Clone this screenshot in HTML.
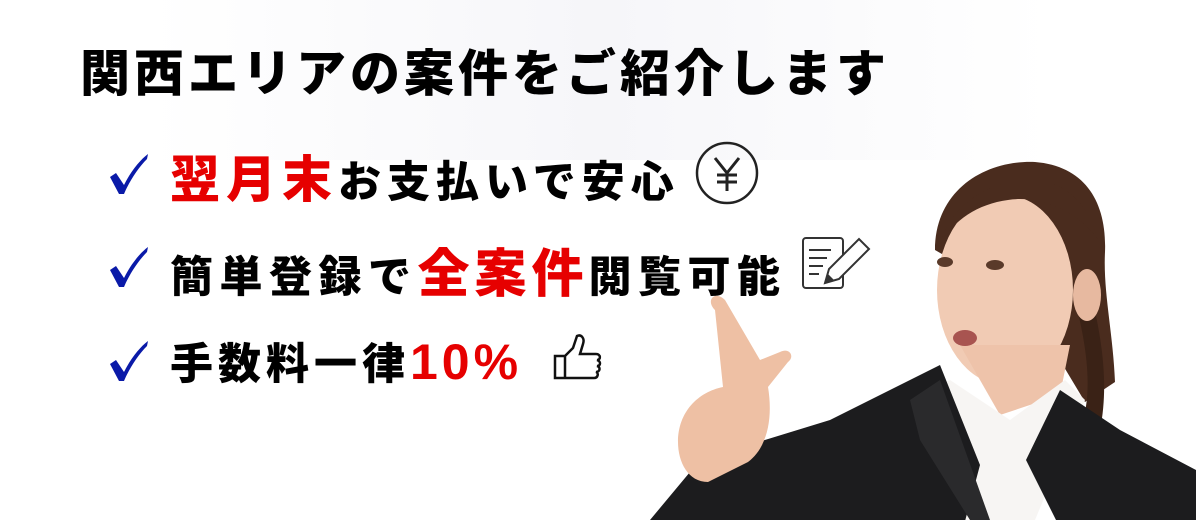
<!DOCTYPE html>
<html><head><meta charset="utf-8"><style>
body{margin:0;width:1196px;height:520px;overflow:hidden;background:#fff;position:relative;font-family:"Liberation Sans","Noto Sans CJK JP",sans-serif;font-weight:900}
.t{position:absolute;white-space:nowrap;color:#000}
.r{color:#e60000}
</style></head><body>
<div style="position:absolute;left:150px;top:0;width:900px;height:160px;background:linear-gradient(90deg,#fff,#f6f6f9 50%,#fff)"></div>
<div class="t" style="left:80px;top:34px;font-size:50px;letter-spacing:4px">関西エリアの案件をご紹介します</div>
<div class="t" style="left:170px;top:140px;font-size:43px;letter-spacing:6px"><span class="r" style="font-size:50px;letter-spacing:6px">翌月末</span>お支払いで安心</div>
<div class="t" style="left:170px;top:232px;font-size:43px;letter-spacing:6.5px">簡単登録で<span class="r" style="font-size:52px;letter-spacing:5px">全案件</span>閲覧可能</div>
<div class="t" style="left:170px;top:330px;font-size:43px;letter-spacing:5px">手数料一律<span class="r" style="font-size:50px;letter-spacing:4px">10%</span></div>
<svg style="position:absolute;left:0;top:0" width="1196" height="520">
<g fill="#0a1aa8">
<path d="M110 177l6-4l8 12c7-14 16-25 24-31l-1 5c-9 9-18 23-23 35l-5 0z"/>
<path d="M110 270l6-4l8 12c7-14 16-25 24-31l-1 5c-9 9-18 23-23 35l-5 0z"/>
<path d="M110 364l6-4l8 12c7-14 16-25 24-31l-1 5c-9 9-18 23-23 35l-5 0z"/>
</g>
<circle cx="727" cy="173" r="30" fill="none" stroke="#222" stroke-width="2.5"/>
<path d="M715 158l12 15l12-15M727 173v18M717 175h20M717 182h20" fill="none" stroke="#222" stroke-width="3"/>
<rect x="803" y="238" width="40" height="50" rx="3" fill="none" stroke="#333" stroke-width="2"/>
<path d="M809 250h22M809 258h18M809 266h14M809 274h10" stroke="#333" stroke-width="2"/>
<path d="M825 283l4-14l30-30l10 10l-30 30z" fill="#fff" stroke="#333" stroke-width="2"/>
<path d="M825 283l3-9l6 6z" fill="#333"/>
<path d="M555 378v-22h10v22zM565 356l8-8l4-12c4-2 8 2 6 8l-3 10h16c5 0 5 6 1 6c4 1 4 6 0 6c4 1 3 6-1 6c3 1 2 6-2 6h-29z" fill="none" stroke="#111" stroke-width="2.5"/>
<path d="M935 250c0-60 50-90 100-88c50 4 72 40 70 90c-2 40 8 80 10 130l-30 20l-60-100z" fill="#4a2c1e"/>
<path d="M1075 300c10 40 20 90 5 130l20 0c10-50 0-100-10-140z" fill="#3a2216"/>
<ellipse cx="1005" cy="290" rx="68" ry="95" fill="#f1cbb4"/>
<path d="M940 245c10-40 50-65 90-65c40 0 60 30 68 60c-20-30-60-45-90-40c-30 4-55 20-68 45z" fill="#4a2c1e"/>
<ellipse cx="1087" cy="295" rx="14" ry="26" fill="#e7b9a0"/>
<path d="M960 345l40 70l60-20l10-50z" fill="#eec3aa"/>
<ellipse cx="965" cy="338" rx="12" ry="8" fill="#a85450"/>
<ellipse cx="945" cy="262" rx="8" ry="5" fill="#5a3a2a"/><ellipse cx="995" cy="265" rx="9" ry="5" fill="#5a3a2a"/>
<path d="M920 395l30-15l60 40l55-40l20 20l-50 120h-100z" fill="#f7f5f3"/>
<path d="M650 520l50-60l130-40l110-55l40 100l-20 75zM1060 390l60 40l76 40v50h-140l-30-60z" fill="#1c1c1e"/>
<path d="M940 380l-30 20l10 40l50 80h20z" fill="#2a2a2c"/>
<path d="M715 310c-10-10 0-20 10-10l35 60l20-8c10-5 15 5 8 10l-20 25c5 30 0 60-20 75l-40 20c-20 0-30-20-30-40c0-30 20-50 45-55z" fill="#eec0a4"/>
</svg>
</body></html>
